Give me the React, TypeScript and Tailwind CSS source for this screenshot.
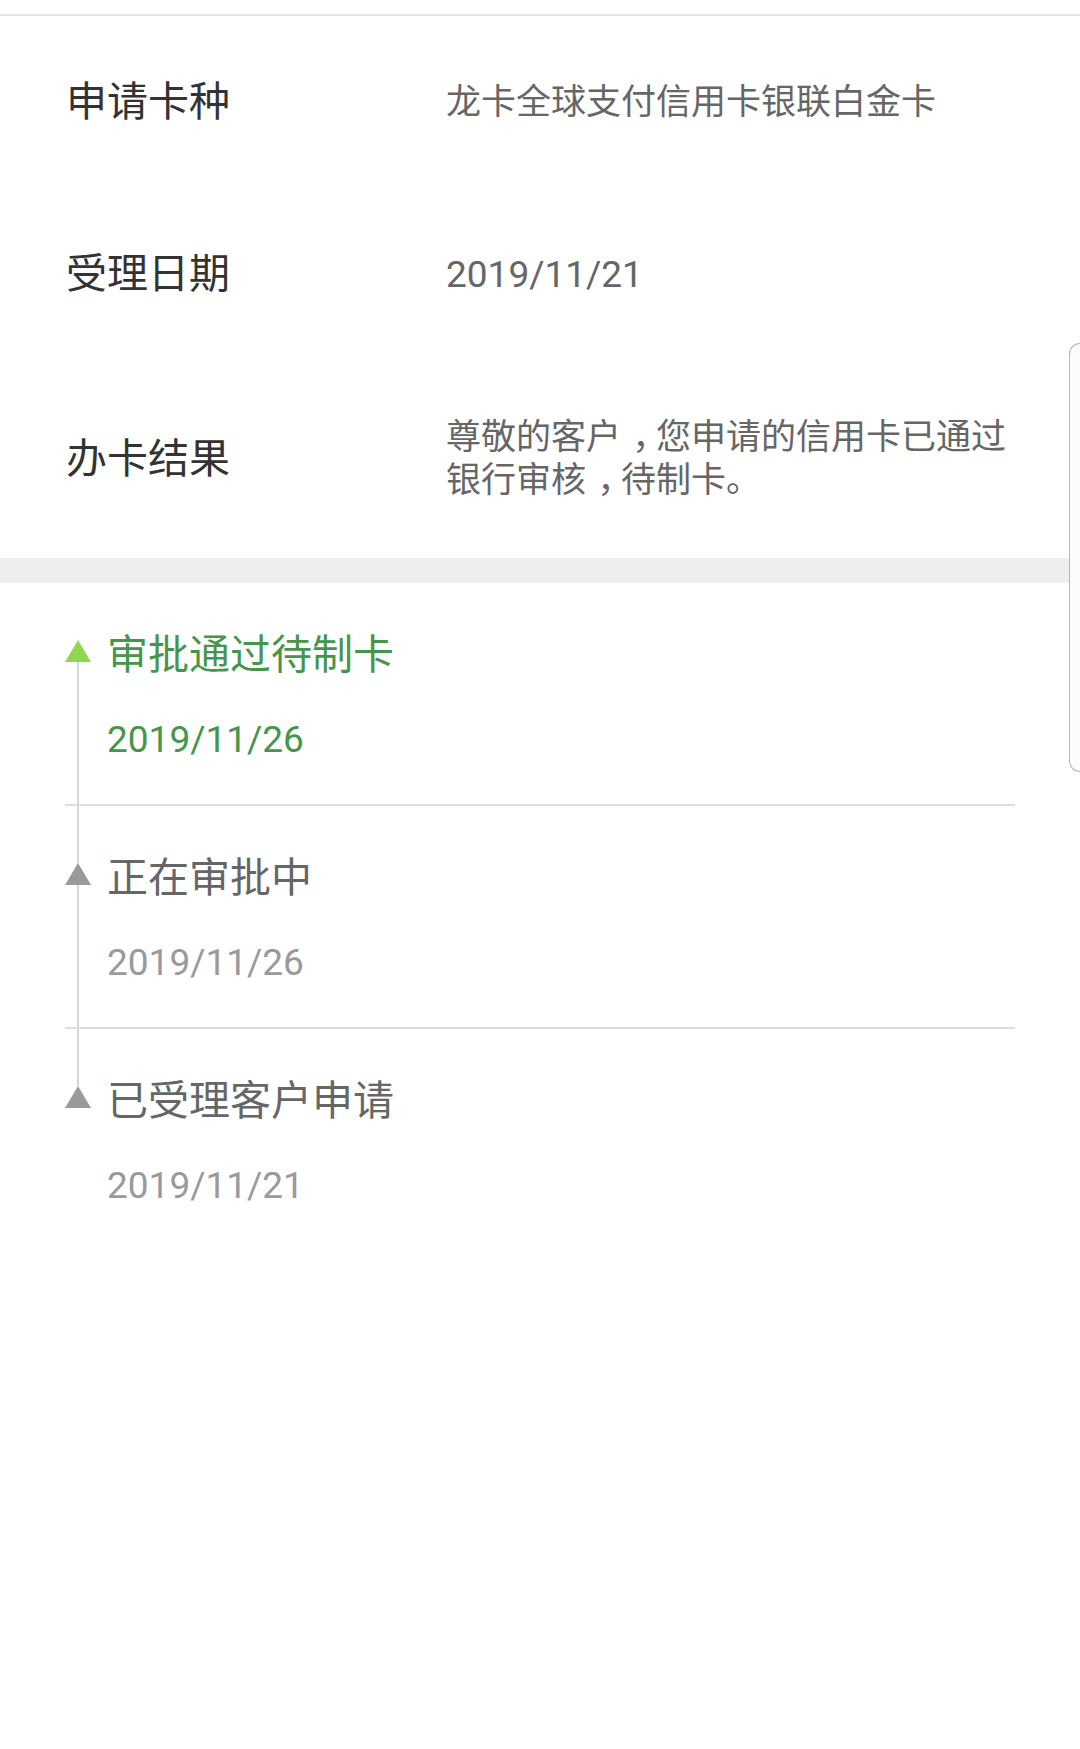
import React from "react";

const font = { fontFamily: 'Roboto, "Noto Sans CJK SC", sans-serif' };

function Tri({ color }: { color: string }) {
  return (
    <svg width="26" height="22" viewBox="0 0 26 22" className="block shrink-0">
      <polygon points="13,0 26,22 0,22" fill={color} />
    </svg>
  );
}

type Item = { title: string; date: string; active?: boolean };

const items: Item[] = [
  { title: "审批通过待制卡", date: "2019/11/26", active: true },
  { title: "正在审批中", date: "2019/11/26" },
  { title: "已受理客户申请", date: "2019/11/21" },
];

function Comma() {
  return (
    <span className="inline-block w-[1em] whitespace-nowrap pl-[0.32em]">，</span>
  );
}

export default function App() {
  return (
    <div
      className="relative w-[1080px] h-[1749px] overflow-hidden bg-white"
      style={font}
    >
      <div className="h-[14px]" />
      <div className="h-[2px] bg-[#e4e4e4]" />

      {/* info rows */}
      <div className="flex items-center py-[56px]">
        <div className="w-[446px] pl-[66px] text-[41px] leading-[60px] text-[#333333]">申请卡种</div>
        <div className="flex-1 pr-[40px] text-[35px] leading-[43px] text-[#666666]">龙卡全球支付信用卡银联白金卡</div>
      </div>
      <div className="flex items-center py-[56px]">
        <div className="w-[446px] pl-[66px] text-[41px] leading-[60px] text-[#333333]">受理日期</div>
        <div className="flex-1 pr-[40px] text-[37px] leading-[43px] text-[#666666]">2019/11/21</div>
      </div>
      <div className="flex items-center py-[56px]">
        <div className="w-[446px] pl-[66px] text-[41px] leading-[60px] text-[#333333]">办卡结果</div>
        <div className="flex-1 pr-[40px] text-[35px] leading-[43px] text-[#666666]">
          尊敬的客户<Comma />您申请的信用卡已通过银行审核<Comma />待制卡。
        </div>
      </div>

      <div className="h-[25px] bg-[#eeeeee]" />

      {/* timeline */}
      <div className="mx-[65px]">
        {items.map((it, i) => {
          const first = i === 0;
          const last = i === items.length - 1;
          return (
            <div
              key={i}
              className={last ? "flex" : "flex border-b-2 border-[#dddddd]"}
            >
              <div className="flex w-[26px] shrink-0 flex-col items-center">
                <div className={first ? "h-[57px] w-[2px]" : "h-[57px] w-[2px] bg-[#d6d6d6]"} />
                <Tri color={it.active ? "#8fd651" : "#9a9a9a"} />
                <div className={last ? "flex-1 w-[2px]" : "flex-1 w-[2px] bg-[#d6d6d6]"} />
              </div>
              <div className="flex flex-col pl-[16px] pt-[47px] pb-[41px]">
                <div
                  className={
                    it.active
                      ? "text-[41px] leading-[50px] text-[#46964a]"
                      : "text-[41px] leading-[50px] text-[#666666]"
                  }
                >
                  {it.title}
                </div>
                <div
                  className={
                    it.active
                      ? "mt-[37px] text-[37px] leading-[46px] text-[#46964a]"
                      : "mt-[37px] text-[37px] leading-[46px] text-[#9a9a9a]"
                  }
                >
                  {it.date}
                </div>
              </div>
            </div>
          );
        })}
      </div>

      {/* edge handle */}
      <div className="absolute right-0 top-[343px] h-[429px] w-[11px] rounded-l-[13px] border border-r-0 border-[#b5b5b5] bg-[#fcfcfc]" />
    </div>
  );
}
